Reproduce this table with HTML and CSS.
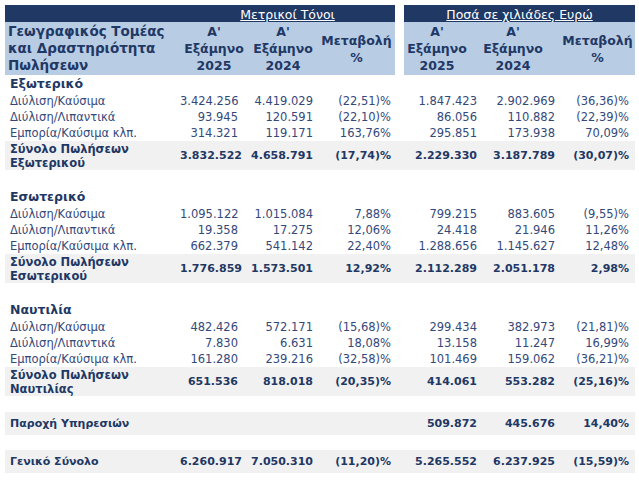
FILE: index.html
```html
<!DOCTYPE html>
<html lang="el">
<head>
<meta charset="utf-8">
<title>Πωλήσεις</title>
<link rel="stylesheet" href="styles.css">
</head>
<body>
<table class="sales">
  <colgroup>
    <col class="c-label">
    <col class="c-n1">
    <col class="c-n2">
    <col class="c-n3">
    <col class="c-gap">
    <col class="c-n4">
    <col class="c-n5">
    <col class="c-n6">
  </colgroup>
  <thead>
    <tr class="h-top">
      <th class="navy"></th>
      <th class="navy title" colspan="3"><span>Μετρικοί Τόνοι</span></th>
      <th class="gap"></th>
      <th class="navy title" colspan="3"><span>Ποσά σε χιλιάδες Ευρώ</span></th>
    </tr>
    <tr class="h-main">
      <th class="lb hl"><span class="ln">Γεωγραφικός Τομέας</span><span class="ln">και Δραστηριότητα</span><span class="ln">Πωλήσεων</span></th>
      <th class="lb hc">Α'<br>Εξάμηνο<br>2025</th>
      <th class="lb hc">Α'<br>Εξάμηνο<br>2024</th>
      <th class="lb hc">Μεταβολή<br>%</th>
      <th class="gap"></th>
      <th class="lb hc h4">Α'<br>Εξάμηνο<br>2025</th>
      <th class="lb hc h5">Α'<br>Εξάμηνο<br>2024</th>
      <th class="lb hc">Μεταβολή<br>%</th>
    </tr>
  </thead>
  <tbody>
    <tr class="sec"><td class="label">Εξωτερικό</td><td colspan="7"></td></tr>
    <tr class="row"><td class="label">Διύλιση/Καύσιμα</td><td class="n1">3.424.256</td><td class="n2">4.419.029</td><td class="n3">(22,51)%</td><td></td><td class="n4">1.847.423</td><td class="n5">2.902.969</td><td class="n6">(36,36)%</td></tr>
    <tr class="row"><td class="label">Διύλιση/Λιπαντικά</td><td class="n1">93.945</td><td class="n2">120.591</td><td class="n3">(22,10)%</td><td></td><td class="n4">86.056</td><td class="n5">110.882</td><td class="n6">(22,39)%</td></tr>
    <tr class="row"><td class="label">Εμπορία/Καύσιμα κλπ.</td><td class="n1">314.321</td><td class="n2">119.171</td><td class="n3">163,76%</td><td></td><td class="n4">295.851</td><td class="n5">173.938</td><td class="n6">70,09%</td></tr>
    <tr class="band"><td class="label"><span class="ln">Σύνολο Πωλήσεων</span><span class="ln">Εξωτερικού</span></td><td class="n1">3.832.522</td><td class="n2">4.658.791</td><td class="n3">(17,74)%</td><td></td><td class="n4">2.229.330</td><td class="n5">3.187.789</td><td class="n6">(30,07)%</td></tr>
    <tr class="spacer"><td colspan="8"></td></tr>

    <tr class="sec"><td class="label">Εσωτερικό</td><td colspan="7"></td></tr>
    <tr class="row"><td class="label">Διύλιση/Καύσιμα</td><td class="n1">1.095.122</td><td class="n2">1.015.084</td><td class="n3">7,88%</td><td></td><td class="n4">799.215</td><td class="n5">883.605</td><td class="n6">(9,55)%</td></tr>
    <tr class="row"><td class="label">Διύλιση/Λιπαντικά</td><td class="n1">19.358</td><td class="n2">17.275</td><td class="n3">12,06%</td><td></td><td class="n4">24.418</td><td class="n5">21.946</td><td class="n6">11,26%</td></tr>
    <tr class="row"><td class="label">Εμπορία/Καύσιμα κλπ.</td><td class="n1">662.379</td><td class="n2">541.142</td><td class="n3">22,40%</td><td></td><td class="n4">1.288.656</td><td class="n5">1.145.627</td><td class="n6">12,48%</td></tr>
    <tr class="band"><td class="label"><span class="ln">Σύνολο Πωλήσεων</span><span class="ln">Εσωτερικού</span></td><td class="n1">1.776.859</td><td class="n2">1.573.501</td><td class="n3">12,92%</td><td></td><td class="n4">2.112.289</td><td class="n5">2.051.178</td><td class="n6">2,98%</td></tr>
    <tr class="spacer"><td colspan="8"></td></tr>

    <tr class="sec"><td class="label">Ναυτιλία</td><td colspan="7"></td></tr>
    <tr class="row"><td class="label">Διύλιση/Καύσιμα</td><td class="n1">482.426</td><td class="n2">572.171</td><td class="n3">(15,68)%</td><td></td><td class="n4">299.434</td><td class="n5">382.973</td><td class="n6">(21,81)%</td></tr>
    <tr class="row"><td class="label">Διύλιση/Λιπαντικά</td><td class="n1">7.830</td><td class="n2">6.631</td><td class="n3">18,08%</td><td></td><td class="n4">13.158</td><td class="n5">11.247</td><td class="n6">16,99%</td></tr>
    <tr class="row"><td class="label">Εμπορία/Καύσιμα κλπ.</td><td class="n1">161.280</td><td class="n2">239.216</td><td class="n3">(32,58)%</td><td></td><td class="n4">101.469</td><td class="n5">159.062</td><td class="n6">(36,21)%</td></tr>
    <tr class="band"><td class="label"><span class="ln">Σύνολο Πωλήσεων</span><span class="ln">Ναυτιλίας</span></td><td class="n1">651.536</td><td class="n2">818.018</td><td class="n3">(20,35)%</td><td></td><td class="n4">414.061</td><td class="n5">553.282</td><td class="n6">(25,16)%</td></tr>
    <tr class="spacer-sm"><td colspan="8"></td></tr>

    <tr class="band-one"><td class="label">Παροχή Υπηρεσιών</td><td class="n1"></td><td class="n2"></td><td class="n3"></td><td></td><td class="n4">509.872</td><td class="n5">445.676</td><td class="n6">14,40%</td></tr>
    <tr class="spacer-xs"><td colspan="8"></td></tr>
    <tr class="band-one"><td class="label">Γενικό Σύνολο</td><td class="n1">6.260.917</td><td class="n2">7.050.310</td><td class="n3">(11,20)%</td><td></td><td class="n4">5.265.552</td><td class="n5">6.237.925</td><td class="n6">(15,59)%</td></tr>
  </tbody>
</table>
</body>
</html>
```

FILE: styles.css
```css
html, body {
  margin: 0;
  padding: 0;
  background: #ffffff;
}

body {
  padding: 5px 0 0 5px;
  font-family: "DejaVu Sans", "Liberation Sans", sans-serif;
  color: #34497a;
}

.sales {
  border-collapse: collapse;
  border-spacing: 0;
  table-layout: fixed;
  width: 630px;
}

.sales th,
.sales td {
  padding: 0;
  white-space: nowrap;
}

.c-label { width: 175px; }
.c-n1 { width: 68px; }
.c-n2 { width: 70px; }
.c-n3 { width: 77px; }
.c-gap { width: 9px; }
.c-n4 { width: 78px; }
.c-n5 { width: 78px; }
.c-n6 { width: 75px; }

.ln {
  display: block;
  text-align: left;
}

/* header */
.h-top th {
  height: 17px;
  font-weight: normal;
}

.navy {
  background: #1f3864;
}

.title {
  color: #ffffff;
  font-size: 12.5px;
  line-height: 15px;
  text-align: center;
  vertical-align: bottom;
}

.title span {
  text-decoration: underline;
  text-underline-offset: 1px;
}

.gap {
  background: #ffffff;
}

.h-main th {
  height: 53px;
}

.lb {
  background: #b8cce4;
  color: #1f3864;
  font-size: 12.5px;
  font-weight: bold;
  line-height: 17px;
}

.sales .hl {
  text-align: left;
  padding-left: 3px;
  font-size: 13.5px;
}

.hc {
  text-align: center;
  vertical-align: middle;
}

.sales .h4 { padding-right: 12px; }
.sales .h5 { padding-right: 16px; }

/* body */
.sales tbody td {
  font-size: 11.5px;
  line-height: 14px;
  text-align: right;
  vertical-align: middle;
}

.sales tbody td.label {
  text-align: left;
  padding-left: 5px;
}

.sales .n1 { padding-right: 10px; }
.sales .n2 { padding-right: 5px; }
.sales .n3 { padding-right: 4px; }
.sales .n4 { padding-right: 5px; }
.sales .n5 { padding-right: 5px; }
.sales .n6 { padding-right: 6px; }

.sales tbody .sec td {
  height: 18px;
  font-weight: bold;
  font-size: 12.5px;
  color: #1f3864;
}

.row td {
  height: 16px;
}

.band td,
.band-one td {
  background: #f1f1f2;
  font-weight: bold;
  color: #1f3864;
}

.sales tbody .band td {
  height: 29px;
  font-size: 11px;
}

.sales tbody .band td.label {
  font-size: 11.5px;
}

.sales tbody .band-one td {
  height: 23px;
  font-size: 11px;
}

.spacer td { height: 18px; }
.spacer-sm td { height: 16px; }
.spacer-xs td { height: 15px; }
```
